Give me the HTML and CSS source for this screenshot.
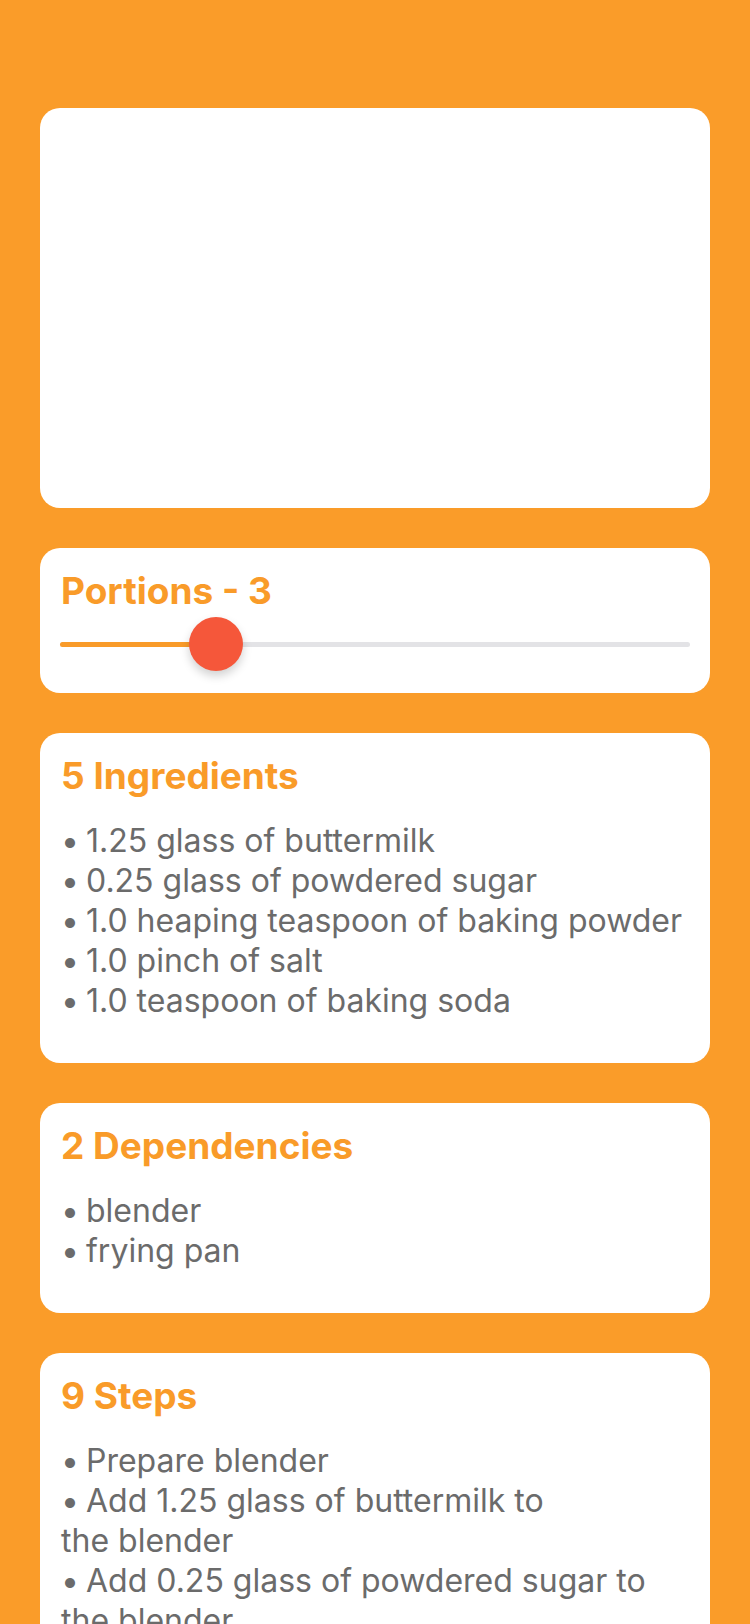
FILE: index.html
```html
<!DOCTYPE html>
<html lang="en">
<head>
    <meta charset="UTF-8">
    <meta name="viewport" content="width=device-width, initial-scale=1.0">
    <title>Pancakes</title>
    <link rel="stylesheet" href="styles.css">
</head>
<body>
<div class="pagina">
    <div class="card foto"></div>

    <div class="card">
        <h2 class="titulo">Portions - 3</h2>
        <div class="slider">
            <div class="trilha"></div>
            <div class="preenchido" style="width: 155px"></div>
            <div class="bolinha" style="left: 128px"></div>
        </div>
    </div>

    <div class="card">
        <h2 class="titulo">5 Ingredients</h2>
        <ul class="lista">
            <li>1.25 glass of buttermilk</li>
            <li>0.25 glass of powdered sugar</li>
            <li>1.0 heaping teaspoon of baking powder</li>
            <li>1.0 pinch of salt</li>
            <li>1.0 teaspoon of baking soda</li>
        </ul>
    </div>

    <div class="card">
        <h2 class="titulo">2 Dependencies</h2>
        <ul class="lista">
            <li>blender</li>
            <li>frying pan</li>
        </ul>
    </div>

    <div class="card">
        <h2 class="titulo">9 Steps</h2>
        <ul class="lista">
            <li>Prepare blender</li>
            <li>Add 1.25 glass of buttermilk to<br>the blender</li>
            <li>Add 0.25 glass of powdered sugar to<br>the blender</li>
            <li>Add 1.0 heaping teaspoon of baking<br>powder to the blender</li>
            <li>Add 1.0 pinch of salt to the blender</li>
            <li>Add 1.0 teaspoon of baking soda to<br>the blender</li>
            <li>Blend everything</li>
            <li>Heat the frying pan</li>
            <li>Fry the pancakes</li>
        </ul>
    </div>
</div>
</body>
</html>
```

FILE: styles.css
```css
body {
    margin: 0;
    background: #fa9c29;
    font-family: Inter, "Noto Sans", sans-serif;
}

.pagina {
    display: flex;
    flex-direction: column;
    gap: 40px;
    padding: 108px 40px 60px;
}

.card {
    background: #fff;
    border-radius: 20px;
    padding: 21px 21px 42px;
}

.foto {
    height: 400px;
    padding: 0;
}

.titulo {
    margin: 0;
    font-size: 37px;
    line-height: 44px;
    font-weight: 700;
    color: #f99b29;
}

.lista {
    list-style: none;
    margin: 23px 0 0;
    padding: 0;
    font-size: 32px;
    line-height: 40px;
    color: #6b6b6b;
}

.lista li::before {
    content: "•";
    margin-right: 7px;
}

/* slider das porcoes */
.slider {
    position: relative;
    height: 54px;
    margin-top: 4px;
}

.card:has(.slider) {
    padding-bottom: 22px;
}

.trilha,
.preenchido {
    position: absolute;
    left: -1px;
    top: 25px;
    height: 5px;
    border-radius: 3px;
}

.trilha {
    right: -1px;
    background: #e3e3e6;
}

.preenchido {
    background: #f99b29;
}

.bolinha {
    position: absolute;
    top: 0;
    width: 54px;
    height: 54px;
    border-radius: 50%;
    background: #f5573a;
    box-shadow: 0 5px 10px rgba(0, 0, 0, 0.18);
}
```
